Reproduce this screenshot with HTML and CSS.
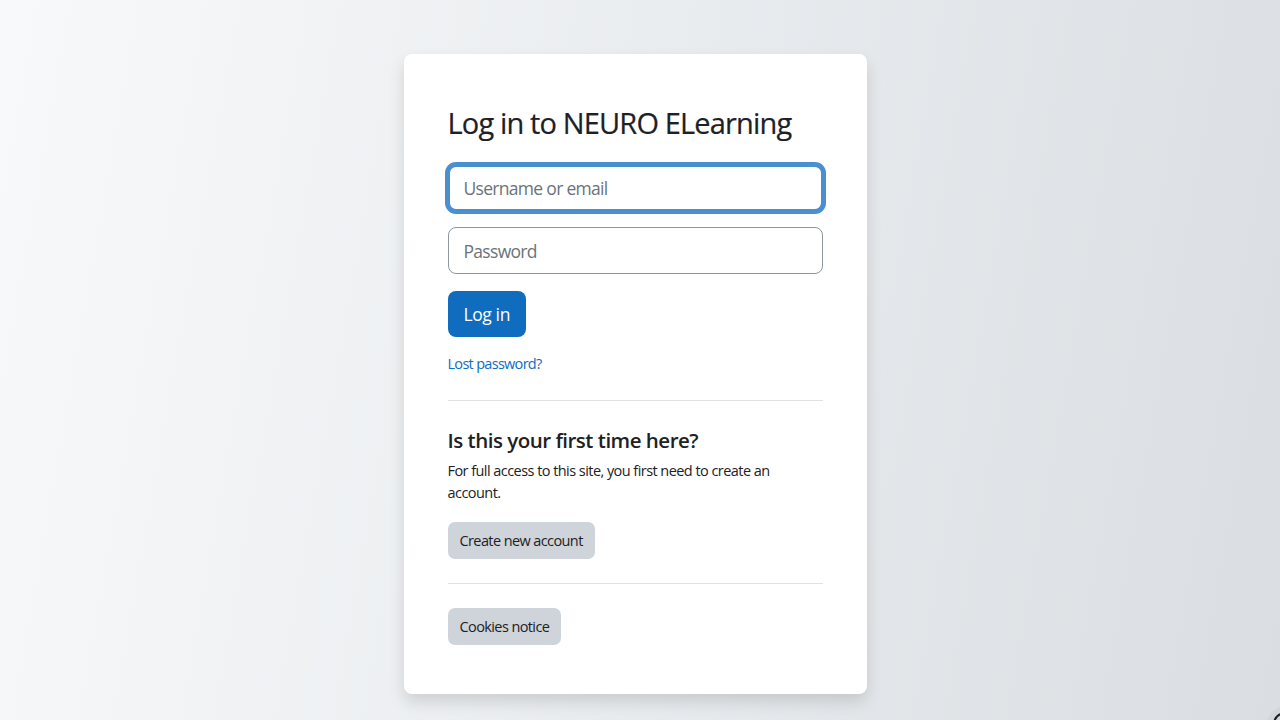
FILE: index.html
```html
<!DOCTYPE html>
<html lang="en">
<head>
<meta charset="utf-8">
<title>Log in to NEURO ELearning</title>
<link rel="stylesheet" href="styles.css">
</head>
<body>
<main class="page">
  <section class="login-card">
    <h1 class="login-heading">Log in to NEURO ELearning</h1>
    <form class="login-form">
      <input class="form-control focused" type="text" placeholder="Username or email" autofocus>
      <input class="form-control pass" type="password" placeholder="Password">
      <button class="btn btn-primary" type="button">Log in</button>
    </form>
    <a class="lost-link" href="#">Lost password?</a>
    <hr class="divider">
    <div class="signup">
      <h2 class="signup-title">Is this your first time here?</h2>
      <p class="signup-text">For full access to this site, you first need to create an account.</p>
      <button class="btn btn-secondary" type="button">Create new account</button>
    </div>
    <hr class="divider divider-second">
    <button class="btn btn-secondary" type="button">Cookies notice</button>
  </section>
</main>
<button class="help-btn" type="button" aria-label="Help">
  <svg width="30" height="30" viewBox="0 0 30 30"><circle cx="15" cy="15" r="11" fill="none" stroke="#1d2125" stroke-width="2"/><path d="M11.5 12.5a3.5 3.5 0 1 1 5 3.2c-1 .5-1.5 1.2-1.5 2.3" fill="none" stroke="#1d2125" stroke-width="2" stroke-linecap="round"/></svg>
</button>
</body>
</html>
```

FILE: styles.css
```css
* { box-sizing: border-box; }
html, body { margin: 0; padding: 0; height: 100%; }
body {
  font-family: "Open Sans", "Noto Sans", "Liberation Sans", sans-serif;
  color: #1d2125;
  background: linear-gradient(100deg, #f8f9fa 0%, #e9ecef 50%, #dadde1 100%);
  overflow: hidden;
}
.page {
  display: flex;
  justify-content: center;
  padding-top: 54px;
  padding-right: 10px;
}
.login-card {
  width: 463px;
  background: #fff;
  border-radius: 8px;
  box-shadow: 0 8px 16px rgba(0,0,0,0.13);
  padding: 50px 44px 49px 44px;
  display: flex;
  flex-direction: column;
  align-items: flex-start;
}
.login-heading {
  font-size: 29px;
  font-weight: 500;
  line-height: 38px;
  letter-spacing: -0.85px;
  margin: 0 0 23px 0;
  -webkit-text-stroke: 0.2px #1d2125;
}
.login-form {
  width: 100%;
  display: flex;
  flex-direction: column;
  align-items: flex-start;
}
.form-control {
  width: 100%;
  height: 46px;
  border: 1px solid #8f959e;
  border-radius: 8px;
  padding: 0 15px;
  font-family: inherit;
  font-size: 17.5px;
  letter-spacing: -0.7px;
  color: #1d2125;
  background: #fff;
  margin-bottom: 16px;
  outline: none;
}
.form-control.pass { height: 47px; margin-bottom: 17px; }
.form-control::placeholder { color: #6a737b; }
.form-control.focused {
  border: 2px solid #4a8fd0;
  box-shadow: 0 0 0 3px #4a8fd0;
  padding: 0 14px;
}
.btn {
  font-family: inherit;
  border: none;
  cursor: pointer;
}
.btn-primary {
  background: #0f6cbf;
  color: #fff;
  font-size: 17.5px;
  letter-spacing: -0.4px;
  height: 46px;
  padding: 0 16px;
  border-radius: 8px;
}
.lost-link {
  color: #0f6cbf;
  text-decoration: none;
  font-size: 14.5px;
  letter-spacing: -0.7px;
  line-height: 22px;
  margin-top: 16px;
}
.divider {
  width: 100%;
  border: 0;
  border-top: 1px solid #dee2e6;
  margin: 25px 0 0 0;
}
.signup {
  display: flex;
  flex-direction: column;
  align-items: flex-start;
  padding-top: 25px;
}
.signup-title {
  font-size: 20.5px;
  font-weight: 600;
  letter-spacing: -0.5px;
  line-height: 28px;
  margin: 0 0 6px 0;
}
.signup-text {
  font-size: 14.5px;
  letter-spacing: -0.55px;
  line-height: 22px;
  margin: 0 0 18px 0;
  max-width: 355px;
}
.btn-secondary {
  background: #ced4da;
  color: #1d2125;
  font-size: 14.5px;
  letter-spacing: -0.6px;
  height: 37px;
  padding: 0 12px;
  border-radius: 7px;
}
.divider-second {
  margin: 24px 0 24px 0;
}
.help-btn {
  position: fixed;
  left: 1266px;
  top: 705px;
  width: 44px;
  height: 44px;
  border-radius: 50%;
  border: none;
  background: #d3d7dc;
  padding: 0;
  display: flex;
  align-items: flex-start;
  justify-content: flex-start;
}
.help-btn svg { margin: 4px 0 0 4px; }
```
